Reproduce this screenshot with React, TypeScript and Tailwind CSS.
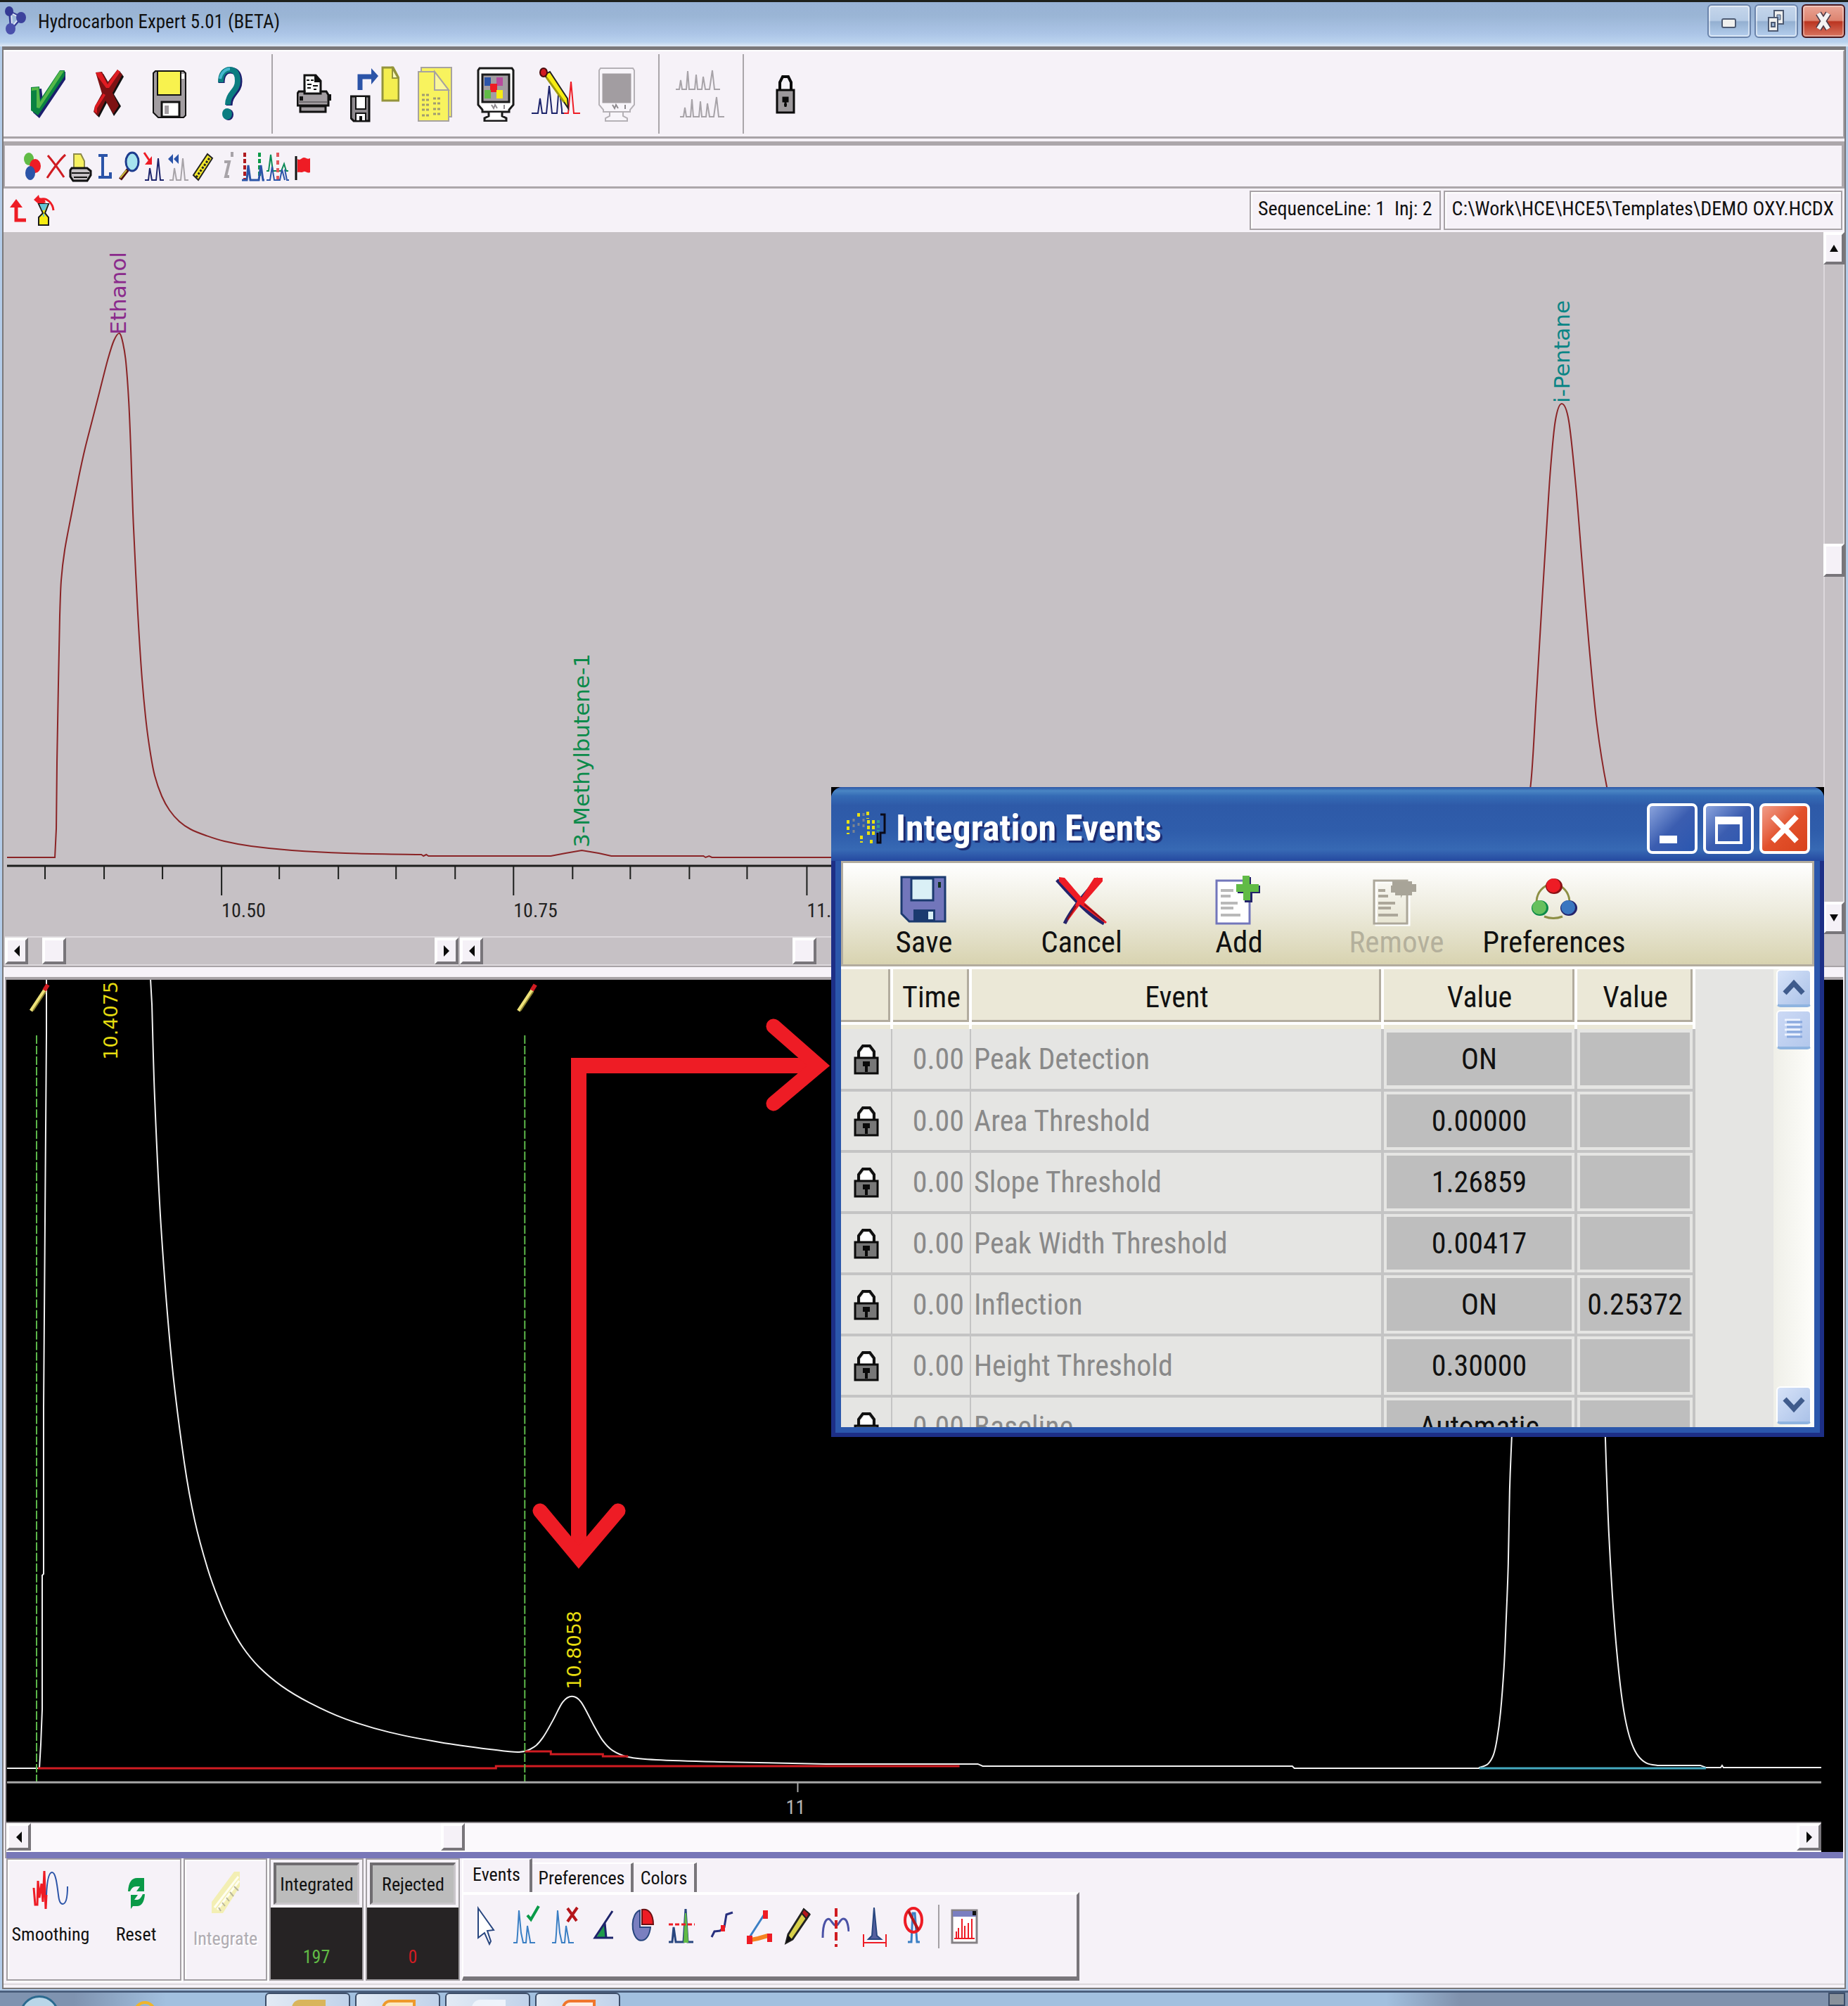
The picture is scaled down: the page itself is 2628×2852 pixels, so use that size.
import type { ReactNode } from "react";

const UI = "font-['Roboto_Condensed','Liberation_Sans',sans-serif]";

function Svg({ w, h, children, label }: { w: number; h: number; children: ReactNode; label?: string }) {
  return (
    <svg width={w} height={h} viewBox={`0 0 ${w} ${h}`} fill="none" aria-label={label} aria-hidden={label ? undefined : true} className="shrink-0">
      {children}
    </svg>
  );
}

/* ---------- main toolbar icons ---------- */

const CheckIcon = () => (
  <Svg w={50} h={70}>
    <path d="M3 28L15 27L17 44L44 3L49 3V14L12 69L3 61Z" fill="#1c1f6e" />
    <path d="M0 25L12 24L13 43L41 1L48 1V9L10 65L0 58Z" fill="#0a8241" />
    <path d="M1 26L11 25L13 46L41 2H47L12 55L8 54V29L1 30Z" fill="#55b848" />
  </Svg>
);
const CrossIcon = () => (
  <Svg w={44} h={70}>
    <path d="M6 8L14 6L22 20L37 2L43 10L29 35L39 52L29 66L19 47L8 68L3 63L14 36Z" fill="#111" />
    <path d="M3 4L12 3L20 18L34 0L41 7L27 33L36 51L28 63L17 44L6 66L0 60L2 52L12 34Z" fill="#7d1113" />
    <path d="M3 4L11 4L20 21L34 0L38 3L22 26L18 26L6 10Z" fill="#e01c22" />
    <path d="M1 60L2 52L14 34L17 36L5 55V62Z" fill="#e01c22" />
  </Svg>
);
const SaveIcon = () => (
  <Svg w={48} h={68}>
    <path d="M4 1H44L47 4V64L44 67H8L1 60V4Z" fill="#a29da1" stroke="#111" strokeWidth="2" />
    <rect x="8" y="2" width="32" height="34" fill="#f8f24e" />
    <path d="M7 2V35H40V2" stroke="#111" strokeWidth="2" />
    <rect x="41" y="5" width="4" height="7" fill="#fff" />
    <rect x="13" y="45" width="25" height="21" fill="#fff" stroke="#111" strokeWidth="3" />
    <rect x="17" y="50" width="6" height="12" fill="#a29da1" />
  </Svg>
);
const HelpIcon = () => (
  <Svg w={36} h={78}>
    <path d="M6 23C6 10 12 5 19 5C28 5 31 12 31 21C31 36 17 38 17 55" stroke="#1c1f6e" strokeWidth="9" />
    <path d="M5 22C5 9 11 4 18 4C26 4 29 11 29 20C29 35 15 37 15 54" stroke="#0b7d80" strokeWidth="8" />
    <path d="M4 17C6 8 12 3 18 3" stroke="#45b8cf" strokeWidth="4" />
    <ellipse cx="16" cy="68" rx="7" ry="8" fill="#1c1f6e" />
    <ellipse cx="14" cy="67" rx="7" ry="8" fill="#0b7d80" />
  </Svg>
);
const PrinterIcon = () => (
  <Svg w={50} h={58}>
    <path d="M11 26V2H27L34 10V26" fill="#fff" stroke="#111" strokeWidth="3" />
    <path d="M26 2V11H34" fill="#111" stroke="#111" strokeWidth="2" />
    <path d="M14 9H18M20 9H24M15 15H21M23 17H30M15 20H20M24 22H28" stroke="#111" strokeWidth="2" />
    <path d="M3 25H11V28H34V25H42L45 30V45H1V28Z" fill="#a29da1" stroke="#111" strokeWidth="3" />
    <rect x="4" y="32" width="5" height="6" fill="#111" />
    <rect x="44" y="29" width="5" height="9" fill="#111" />
    <path d="M5 46H41V54H5Z" fill="#a29da1" stroke="#111" strokeWidth="3" />
    <path d="M2 40H43" stroke="#6f6b6f" strokeWidth="2" />
  </Svg>
);
const ExportIcon = () => (
  <Svg w={70} h={80}>
    <path d="M14 34V15H31" stroke="#2b54a8" strokeWidth="7" />
    <path d="M30 3L40 14L30 26Z" fill="#2b54a8" />
    <path d="M46 2H61L69 17V49H46Z" fill="#f4ee50" stroke="#94943c" strokeWidth="3" />
    <path d="M60 3V17H68Z" fill="#fcfabd" stroke="#94943c" strokeWidth="2" />
    <path d="M1 43H27V78H5L1 74Z" fill="#8e8a8e" stroke="#111" strokeWidth="3" />
    <rect x="8" y="43" width="14" height="18" fill="#fff" stroke="#111" strokeWidth="2" />
    <rect x="8" y="67" width="14" height="11" fill="#fff" stroke="#111" strokeWidth="2" />
    <rect x="13" y="71" width="4" height="7" fill="#111" />
  </Svg>
);
const NotesIcon = () => (
  <Svg w={50} h={78}>
    <path d="M5 1H48V71H5Z" fill="#f8f35e" stroke="#a7a3a0" strokeWidth="2" />
    <path d="M1 7H24L44 33V77H1Z" fill="#f8f35e" stroke="#a7a3a0" strokeWidth="2" />
    <path d="M24 7V33H44Z" fill="#faf79a" stroke="#a7a3a0" strokeWidth="2" />
    <path d="M6 40H18M22 45H34M6 47H18M22 52H34M6 54H18M22 60H34M6 61H18M22 67H34M6 69H18" stroke="#a09c70" strokeWidth="3" strokeDasharray="4 2" />
  </Svg>
);
function MonitorIcon({ off }: { off?: boolean }) {
  const line = off ? "#b5b1b6" : "#1a1a1a";
  return (
    <Svg w={54} h={78}>
      <path d="M4 2H50L52 5V54L46 61V64H8V61L2 54V5Z" fill={off ? "#f8f5fa" : "#fff"} stroke={line} strokeWidth={off ? 2 : 3} />
      <rect x="8" y="11" width="38" height="39" fill="#a29da1" stroke={off ? "#a29da1" : line} strokeWidth="3" />
      {!off && (
        <>
          <rect x="11" y="15" width="9" height="12" fill="#2b54a8" />
          <rect x="28" y="15" width="9" height="12" fill="#b84b9e" />
          <rect x="19" y="24" width="10" height="12" fill="#ee1c25" />
          <rect x="11" y="33" width="9" height="12" fill="#61bb46" />
          <rect x="28" y="33" width="9" height="12" fill="#f7ec13" />
        </>
      )}
      <path d="M21 54L24 59L26 54L29 59M39 54V60" stroke="#8e8a8e" strokeWidth="2" />
      <path d="M17 65V70L11 73V77H42V73L36 70V65" fill={off ? "#f8f5fa" : "#fff"} stroke={line} strokeWidth={off ? 2 : 3} />
    </Svg>
  );
}
const EditPeaksIcon = () => (
  <Svg w={70} h={76}>
    <path d="M0 65H9L12 44L15 65H21L25 26L29 65H36L39 26L43 60V65H48" stroke="#1d246b" strokeWidth="2" />
    <path d="M46 65H52L56 20L60 65H69" stroke="#ee1c25" strokeWidth="2" />
    <path d="M18 10L44 46L52 58L51 44L26 6Z" fill="#f7ec13" stroke="#222" strokeWidth="2" />
    <path d="M21 14L46 49" stroke="#a09a10" strokeWidth="3" />
    <ellipse cx="17" cy="7" rx="5" ry="6" fill="#d01c22" stroke="#4b0c0d" strokeWidth="2" />
  </Svg>
);
const GhostPeaksIcon = () => (
  <Svg w={74} h={72}>
    <path d="M1 29H6L8 16L10 29H16L18 3L20 29H28L30 8L32 29H38L40 11L43 29H49L53 2L56 29H64" stroke="#a7a3a8" strokeWidth="2" />
    <path d="M7 68H12L14 55L16 68H22L24 43L26 68H34L36 46L38 68H44L46 49L49 68H55L59 40L62 68H70" stroke="#a7a3a8" strokeWidth="2" />
  </Svg>
);
const LockIcon = () => (
  <Svg w={28} h={58}>
    <path d="M6 24V12L10 4H18L22 12V24" stroke="#0a0a0a" strokeWidth="4" />
    <rect x="2" y="23" width="24" height="32" fill="#9c989b" stroke="#0a0a0a" strokeWidth="3" />
    <path d="M14 33V47M11 34H17V39H11ZM12 44H16" stroke="#0a0a0a" strokeWidth="3" />
  </Svg>
);

/* ---------- small toolbar icons, drawn in a 34 x 44 box ---------- */

const small: { name: string; art: ReactNode }[] = [
  {
    name: "Colours",
    art: (
      <>
        <ellipse cx="13" cy="11" rx="7" ry="9" fill="#61bb46" />
        <ellipse cx="22" cy="21" rx="8" ry="10" fill="#ee1c25" />
        <ellipse cx="15" cy="31" rx="7" ry="10" fill="#2b54a8" />
      </>
    ),
  },
  { name: "Delete", art: <path d="M5 6C12 14 22 28 28 37M30 5C22 12 12 26 4 38" stroke="#d01c22" strokeWidth="3" /> },
  {
    name: "Print",
    art: (
      <>
        <path d="M7 24V4H17L22 14V24" fill="#f7f160" stroke="#8e8a4a" strokeWidth="2" />
        <path d="M4 24H26L31 28V34L26 42H6L2 36V27Z" fill="#c6c1c5" stroke="#111" strokeWidth="3" />
        <path d="M4 31H29M7 37H26" stroke="#111" strokeWidth="2" />
      </>
    ),
  },
  { name: "Labels", art: <path d="M7 6H20M13 6V36M7 37H24V30" stroke="#2b54a8" strokeWidth="4" /> },
  {
    name: "Zoom",
    art: (
      <>
        <path d="M3 40L14 26" stroke="#4b0c0d" strokeWidth="5" />
        <path d="M3 38L12 27" stroke="#c9bd3d" strokeWidth="2" />
        <ellipse cx="20" cy="15" rx="9" ry="13" fill="#a7e4ee" stroke="#1d3c8e" strokeWidth="3" />
      </>
    ),
  },
  {
    name: "Jump to peak",
    art: (
      <>
        <path d="M2 2L10 14" stroke="#ee1c25" strokeWidth="3" />
        <path d="M13 7V19H3Z" fill="#ee1c25" />
        <path d="M3 41H8L10 24L13 41H19L22 10L25 41H30" stroke="#1d246b" strokeWidth="2" />
      </>
    ),
  },
  {
    name: "Previous peak",
    art: (
      <>
        <path d="M8 4V18L1 11ZM16 4V18L9 11Z" fill="#2b54a8" />
        <path d="M3 41H8L10 24L13 41H19L22 10L25 41H30" stroke="#a7a3a8" strokeWidth="2" />
      </>
    ),
  },
  {
    name: "Ruler",
    art: (
      <>
        <path d="M2 34L22 4L29 10L9 41Z" fill="#f4ea2a" stroke="#222" strokeWidth="2" />
        <path d="M6 37L26 8" stroke="#222" strokeWidth="3" strokeDasharray="3 2" />
      </>
    ),
  },
  { name: "Info", art: <path d="M20 3H22V8M11 15H18L13 36H18" stroke="#a7a3a8" strokeWidth="4" /> },
  {
    name: "Start markers",
    art: (
      <>
        <path d="M5 2V40" stroke="#b01b20" strokeWidth="4" strokeDasharray="6 3" />
        <path d="M26 2V36" stroke="#0a9a48" strokeWidth="4" strokeDasharray="6 3" />
        <path d="M1 41H8L10 20L13 41H25L28 20L31 41H33" stroke="#2b54a8" strokeWidth="3" />
      </>
    ),
  },
  {
    name: "Overlay",
    art: (
      <>
        <path d="M1 28H4L7 5L10 28H22L26 18L29 28H32" stroke="#0b8a56" strokeWidth="2" />
        <path d="M17 2V40" stroke="#e2575c" strokeWidth="4" strokeDasharray="6 5" />
        <path d="M1 41H6L9 22L12 41H20L23 26L27 41M27 26L30 41H33" stroke="#2b54a8" strokeWidth="2" />
      </>
    ),
  },
  {
    name: "Flag",
    art: (
      <>
        <path d="M8 7V41" stroke="#111" strokeWidth="3" />
        <path d="M10 11C14 14 16 9 19 9C22 9 24 12 28 10V30C24 32 21 28 19 29C15 31 13 29 10 30Z" fill="#ee1c25" />
      </>
    ),
  },
];

/* ---------- event tool icons, drawn in a 40 x 60 box ---------- */

const bluePeaks = "M2 54H7L8 42L10 8L13 40L16 54H20L22 30L26 52V54H33";
const tools: { name: string; art: ReactNode }[] = [
  {
    name: "Select",
    art: <path d="M7 5L29 36L20 37L25 52L23 56L16 40L7 47Z" fill="#fff" stroke="#28467f" strokeWidth="2" />,
  },
  {
    name: "Accept peak",
    art: (
      <>
        <path d={bluePeaks} stroke="#3a7fc4" strokeWidth="2" />
        <path d="M22 15L27 21L38 2" stroke="#0a9a48" strokeWidth="4" />
      </>
    ),
  },
  {
    name: "Reject peak",
    art: (
      <>
        <path d={bluePeaks} stroke="#3a7fc4" strokeWidth="2" />
        <path d="M24 5L37 23M38 4L24 24" stroke="#b5161b" strokeWidth="4" />
      </>
    ),
  },
  {
    name: "Slope",
    art: (
      <>
        <path d="M22 26L10 47H24Z" fill="#1f9a4a" />
        <path d="M33 9L8 47H34M22 26L24 47" stroke="#1d246b" strokeWidth="3" />
      </>
    ),
  },
  {
    name: "Area",
    art: (
      <>
        <path d="M17 8C4 12 3 42 15 50C26 54 31 42 32 32H17Z" fill="#7a7fc0" stroke="#28467f" strokeWidth="2" />
        <path d="M20 7C30 5 36 14 36 28H20Z" fill="#ee1c25" stroke="#6b1013" strokeWidth="2" />
      </>
    ),
  },
  {
    name: "Height limit",
    art: (
      <>
        <path d="M3 53H8L10 32L13 53H24L27 6L30 53H38" stroke="#28467f" strokeWidth="3" />
        <path d="M25 53L27 12L30 53Z" fill="#61bb46" stroke="#61bb46" strokeWidth="2" />
        <path d="M3 28H40" stroke="#ee1c25" strokeWidth="3" strokeDasharray="6 3" />
      </>
    ),
  },
  {
    name: "Inflection",
    art: (
      <>
        <path d="M9 46L13 38L21 37L27 32L30 14L39 11" stroke="#28307f" strokeWidth="3" />
        <rect x="22" y="29" width="6" height="9" fill="#ee1c25" />
      </>
    ),
  },
  {
    name: "Baseline points",
    art: (
      <>
        <path d="M8 46L30 12" stroke="#3a7fc4" strokeWidth="3" />
        <path d="M10 50L20 48L34 44" stroke="#f58220" strokeWidth="6" />
        <path d="M27 8H34V20H27ZM4 44H12V56H4ZM33 41H40V53H33Z" fill="#ee1c25" />
      </>
    ),
  },
  {
    name: "Draw",
    art: (
      <>
        <path d="M5 54L8 42L30 7L38 14L14 49Z" fill="#d8d04a" stroke="#222" strokeWidth="3" />
        <path d="M30 6L38 13L34 20L27 12Z" fill="#b5161b" stroke="#222" strokeWidth="2" />
        <path d="M5 54L8 43L13 49Z" fill="#111" />
      </>
    ),
  },
  {
    name: "Split",
    art: (
      <>
        <path d="M2 47C2 24 8 18 12 21C16 25 18 30 21 30C24 30 27 20 31 20C36 20 38 26 39 38" stroke="#4b52a6" strokeWidth="3" />
        <path d="M21 5V60" stroke="#d01c22" strokeWidth="4" strokeDasharray="12 5" />
      </>
    ),
  },
  {
    name: "Peak width",
    art: (
      <>
        <path d="M12 49L17 44L20 4L24 44L30 49Z" fill="#54609f" stroke="#28467f" strokeWidth="2" />
        <path d="M5 54H37M5 42V60M37 42V60" stroke="#ee1c25" strokeWidth="2" />
      </>
    ),
  },
  {
    name: "Ignore peak",
    art: (
      <>
        <path d="M13 53H18L20 12L23 12L26 53H30" stroke="#3a7fc4" strokeWidth="3" />
        <ellipse cx="21" cy="22" rx="12" ry="17" stroke="#ee1c25" strokeWidth="4" />
        <path d="M14 9L28 36" stroke="#b5161b" strokeWidth="4" />
      </>
    ),
  },
];

const ReportIcon = () => (
  <Svg w={40} h={60}>
    <rect x="2" y="8" width="35" height="46" fill="#fff" stroke="#858185" strokeWidth="3" />
    <rect x="3" y="9" width="33" height="8" fill="#7a7fc0" />
    <rect x="31" y="9" width="5" height="6" fill="#111" />
    <path d="M5 48H34M8 48V38M11 48V33M16 48V20M20 48V30M25 48V26M30 48V20" stroke="#ee1c25" strokeWidth="2" />
  </Svg>
);

/* ---------- classic scroll bar parts ---------- */

const raised = "bg-[#f5f1f7] border-t-4 border-l-4 border-t-white border-l-white border-r-4 border-b-4 border-r-[#78757a] border-b-[#78757a]";

function Arrow({ dir }: { dir: "left" | "right" | "up" | "down" }) {
  if (dir === "left" || dir === "right")
    return <Svg w={8} h={16}><path d={dir === "left" ? "M8 0V16L0 8Z" : "M0 0V16L8 8Z"} fill="#0a0a0a" /></Svg>;
  return <Svg w={12} h={10}><path d={dir === "up" ? "M6 0L12 10H0Z" : "M0 0H12L6 10Z"} fill="#0a0a0a" /></Svg>;
}

function ScrollButton({ dir, className }: { dir: "left" | "right" | "up" | "down"; className: string }) {
  return (
    <button type="button" aria-label={`Scroll ${dir}`} className={`flex shrink-0 items-center justify-center ${raised} ${className}`}>
      <Arrow dir={dir} />
    </button>
  );
}

/* Smooth path through a list of points (Catmull-Rom converted to cubic curves). */
function smooth(p: number[][], start = "M") {
  let d = `${start}${p[0][0]} ${p[0][1]}`;
  for (let i = 0; i < p.length - 1; i++) {
    const a = p[i - 1] ?? p[i];
    const b = p[i];
    const c = p[i + 1];
    const e = p[i + 2] ?? c;
    d += `C${b[0] + (c[0] - a[0]) / 6} ${b[1] + (c[1] - a[1]) / 6} ${c[0] - (e[0] - b[0]) / 6} ${c[1] - (e[1] - b[1]) / 6} ${c[0]} ${c[1]}`;
  }
  return d;
}

/* ---------- upper chromatogram ---------- */

const TOP = { x: 5, y: 330, w: 2587, h: 1001 };
const topCurve =
  "M10 1219H78L80 1178L81 1083L83 971L85 874" +
  smooth([[85, 874], [87, 825], [92, 782], [102, 729], [112, 678], [121, 637], [131, 598], [142, 555], [153, 512], [162, 484], [170, 474], [175, 489], [179, 515], [183, 570], [186, 640], [189, 730], [193, 816], [197, 891], [202, 966], [208, 1029], [214, 1072], [220, 1103], [230, 1132], [241, 1152], [255, 1168], [271, 1179], [293, 1188], [319, 1196], [357, 1203], [415, 1209], [491, 1213], [599, 1215]], "L") +
  "L602 1217L606 1215L609 1217H783L804 1213L827 1209L851 1213L869 1217H1000L1003 1219L1008 1217L1012 1219H2100" +
  smooth([[2100, 1219], [2140, 1200], [2165, 1160], [2176, 1115], [2184, 990], [2191, 873], [2198, 760], [2204, 668], [2211, 598], [2220, 574], [2230, 598], [2240, 690], [2249, 800], [2259, 919], [2270, 1030], [2284, 1118], [2300, 1180], [2330, 1219]], "L") +
  "H2580";
const minorTicks = [64, 148, 231, 397, 481, 563, 647, 814, 896, 980, 1062];
const majorTicks = [
  { x: 315, text: "10.50" },
  { x: 730, text: "10.75" },
  { x: 1147, text: "11.00" },
];
const topLabels = [
  { x: 168, y: 476, text: "Ethanol", color: "text-[#8a2a8c]" },
  { x: 827, y: 1205, text: "3-Methylbutene-1", color: "text-[#0b8a4a]" },
  { x: 2220, y: 573, text: "i-Pentane", color: "text-[#0b8585]" },
];

function UpperChart() {
  const { x, y, w, h } = TOP;
  return (
    <div className="relative h-[1001px] overflow-hidden">
      <svg viewBox={`${x} ${y} ${w} ${h}`} preserveAspectRatio="none" className="absolute inset-0 size-full" fill="none" aria-label="Named peaks chromatogram">
        <path d={topCurve} stroke="#8a2426" strokeWidth="2" />
        <path d="M10 1231H2592" stroke="#1c1e1c" strokeWidth="3" />
        <path d={minorTicks.map((t) => `M${t} 1231V1250`).join("") + majorTicks.map((t) => `M${t.x} 1231V1273`).join("")} stroke="#1c1e1c" strokeWidth="2" />
      </svg>
      {topLabels.map((l) => (
        <span
          key={l.text}
          className={`absolute -translate-x-1/2 rotate-180 [writing-mode:vertical-rl] font-['DejaVu_Sans',sans-serif] text-[31px] leading-[32px] ${l.color}`}
          style={{ left: `${((l.x - x) / w) * 100}%`, bottom: `${((y + h - l.y) / h) * 100}%` }}
        >
          {l.text}
        </span>
      ))}
      {majorTicks.map((t) => (
        <span key={t.text} className="absolute bottom-[18px] text-[28px] leading-[36px] text-[#222]" style={{ left: `${((t.x - x) / w) * 100}%` }}>
          {t.text}
        </span>
      ))}
    </div>
  );
}

/* ---------- lower chromatogram ---------- */

const LOW = { x: 9, y: 1394, w: 2580, h: 1196 };
const lowCurve =
  "M10 2514H56L58 2480L60 2430V2240L62 2238V2000L66 1470V1394M214 1394L216 1430" +
  smooth([[216, 1430], [220, 1564], [229, 1746], [244, 1935], [262, 2080], [277, 2163], [295, 2230], [311, 2275], [326, 2309], [345, 2342], [368, 2370], [400, 2397], [440, 2421], [491, 2444], [554, 2463], [625, 2477], [696, 2487], [738, 2491], [759, 2484], [772, 2470], [786, 2446], [800, 2420], [813, 2412], [826, 2420], [844, 2453], [857, 2475], [871, 2489], [893, 2498], [933, 2502], [1024, 2505], [1174, 2508]], "L") +
  "H1390L1397 2511H1837L1840 2514H2103" +
  smooth([[2103, 2513], [2115, 2508], [2123, 2495], [2128, 2473], [2133, 2435], [2138, 2370], [2141, 2304], [2144, 2224], [2146, 2120], [2149, 2043], [2160, 1800]], "L") +
  smooth([[2275, 1800], [2282, 2043], [2284, 2103], [2287, 2180], [2292, 2268], [2298, 2345], [2305, 2410], [2312, 2452], [2320, 2480], [2329, 2497], [2341, 2507], [2356, 2510]]) +
  "H2417L2425 2513H2446L2448 2510L2450 2513H2589";
const lowLabels = [
  { x: 158, y: 1508, text: "10.4075" },
  { x: 817, y: 2402, text: "10.8058" },
];

function LowerChart() {
  const { x, y, w, h } = LOW;
  return (
    <div className="relative min-h-[1190px] flex-1 overflow-hidden">
      <svg viewBox={`${x} ${y} ${w} ${h}`} preserveAspectRatio="none" className="absolute inset-0 size-full" fill="none" aria-label="Integrated chromatogram">
        <path d={lowCurve} stroke="#f2f2f2" strokeWidth="2" />
        <path d="M54 2514H705V2511H1364M746 2490H783V2494H857V2497H893" stroke="#d01c22" strokeWidth="3" />
        <path d="M2103 2514H2425" stroke="#45a9c0" strokeWidth="3" />
        <path d="M52 1473V2533M746 1473V2533" stroke="#5db84a" strokeWidth="2" strokeDasharray="12 3" />
        <path d="M10 2534H2589" stroke="#a8a8a8" strokeWidth="3" />
        <path d="M1134 2535V2548" stroke="#a8a8a8" strokeWidth="2" />
        {[42, 735].map((px) => (
          <g key={px}>
            <path d={`M${px + 2} 1438L${px + 22} 1408`} stroke="#eee27a" strokeWidth="5" />
            <path d={`M${px + 5} 1438L${px + 23} 1411`} stroke="#8d8430" strokeWidth="2" />
            <path d={`M${px + 21} 1409L${px + 26} 1401`} stroke="#d01c22" strokeWidth="6" />
          </g>
        ))}
      </svg>
      {lowLabels.map((l) => (
        <span
          key={l.text}
          className="absolute -translate-x-1/2 rotate-180 [writing-mode:vertical-rl] font-['DejaVu_Sans',sans-serif] text-[27px] leading-[28px] text-[#e6dc10]"
          style={{ left: `${((l.x - x) / w) * 100}%`, bottom: `${((y + h - l.y) / h) * 100}%` }}
        >
          {l.text}
        </span>
      ))}
      <span className="absolute bottom-1 -translate-x-1/2 text-[28px] leading-8 text-[#b4b4b4]" style={{ left: `${((1131 - x) / w) * 100}%` }}>
        11
      </span>
      <svg viewBox="755 1440 435 800" width="435" height="800" className="absolute left-[746px] top-[46px]" fill="none" aria-hidden>
        <path d="M1162 1516H823V2210" stroke="#ee1c25" strokeWidth="22" />
        <path d="M1100 1460L1164 1516L1100 1570M768 2149L823 2215L879 2149" stroke="#ee1c25" strokeWidth="21" strokeLinecap="round" />
      </svg>
    </div>
  );
}

/* ---------- Integration Events window ---------- */

const rows = [
  ["Peak Detection", "ON", ""],
  ["Area Threshold", "0.00000", ""],
  ["Slope Threshold", "1.26859", ""],
  ["Peak Width Threshold", "0.00417", ""],
  ["Inflection", "ON", "0.25372"],
  ["Height Threshold", "0.30000", ""],
  ["Baseline", "Automatic", ""],
];

const dialogTools: { name: string; disabled?: boolean; art: ReactNode }[] = [
  {
    name: "Save",
    art: (
      <>
        <path d="M6 4H68V67H17L6 56Z" fill="#7276bb" stroke="#1b3a6f" strokeWidth="3" />
        <rect x="20" y="6" width="31" height="31" fill="#daf0f6" stroke="#1b3a6f" strokeWidth="3" />
        <rect x="58" y="11" width="4" height="8" fill="#12331f" />
        <rect x="23" y="50" width="31" height="17" fill="#1b3a6f" />
        <rect x="44" y="53" width="7" height="11" fill="#daf0f6" />
      </>
    ),
  },
  {
    name: "Cancel",
    art: (
      <>
        <path d="M3 8C14 20 46 58 70 70M62 6C46 24 26 46 14 70" stroke="#24246b" strokeWidth="5" />
        <path d="M6 4L14 5L38 33L56 5L68 5L68 10L42 40L74 68L72 70L36 43L17 68L32 38L6 10Z" fill="#ee1c25" />
        <path d="M42 43L70 66M30 45L18 64" stroke="#8a1216" strokeWidth="2" />
      </>
    ),
  },
  {
    name: "Add",
    art: (
      <>
        <rect x="6" y="9" width="47" height="61" fill="#fff" stroke="#7276bb" strokeWidth="3" />
        <path d="M12 23H30M12 31H26M12 41H36M12 48H30M12 58H40" stroke="#b9b9b9" strokeWidth="4" />
        <path d="M45 4H55V16H68V27H57V40H46V27H36V16H45Z" fill="#24246b" />
        <path d="M43 2H53V14H66V25H54V37H44V25H34V14H43Z" fill="#61bb46" />
      </>
    ),
  },
  {
    name: "Remove",
    disabled: true,
    art: (
      <>
        <rect x="9" y="11" width="47" height="61" stroke="#fff" strokeWidth="3" />
        <rect x="6" y="9" width="47" height="61" stroke="#aca79a" strokeWidth="3" />
        <path d="M12 23H22M12 31H26M12 41H36M12 48H30M12 58H40" stroke="#aca79a" strokeWidth="4" />
        <path d="M32 10H60V14H66V25H60V30H46L44 34V30H36V26H30V16H32Z" fill="#a8a498" />
      </>
    ),
  },
  {
    name: "Preferences",
    art: (
      <>
        <path d="M27 16C17 22 13 30 13 40M46 16C56 22 60 30 60 40M24 60C32 63 42 63 50 60" stroke="#8d8f45" strokeWidth="3" />
        <ellipse cx="38" cy="17" rx="12" ry="11" fill="#8a1216" />
        <ellipse cx="37" cy="16" rx="10" ry="10" fill="#ee1c25" />
        <ellipse cx="18" cy="48" rx="12" ry="11" fill="#0a8a48" />
        <ellipse cx="17" cy="47" rx="10" ry="10" fill="#66c05e" />
        <ellipse cx="59" cy="48" rx="12" ry="11" fill="#24246b" />
        <ellipse cx="58" cy="47" rx="10" ry="10" fill="#3a76c0" />
      </>
    ),
  },
];

const RowLock = () => (
  <Svg w={36} h={46} label="Locked">
    <path d="M7 20V12L13 4H23L29 12V20" stroke="#111" strokeWidth="4" />
    <path d="M10 20V13L15 7H21L26 13V20" fill="#fff" />
    <rect x="2" y="21" width="32" height="22" fill="#777" stroke="#0a0a0a" strokeWidth="3" />
    <path d="M13 26H23V33H20V41H16V33H13Z" fill="#0a0a0a" />
  </Svg>
);

function Th({ children, label }: { children?: ReactNode; label?: string }) {
  return (
    <th aria-label={label} className="h-[85px] border-r-4 border-white bg-[#ebe8d7] p-0 align-top font-normal">
      <div className="flex h-[75px] items-center justify-center border-b-[3px] border-r-[3px] border-[#b2ac9e] pl-1 pt-2 shadow-[0_4px_0_#fff]">{children}</div>
    </th>
  );
}

function DialogScroll({ dir }: { dir: "up" | "down" }) {
  return (
    <button type="button" aria-label={`Scroll ${dir}`} className="mx-1 flex h-[54px] shrink-0 items-center justify-center rounded-md border-2 border-b-4 border-white border-b-[#8fb4e0] bg-gradient-to-br from-[#d6e2f8] to-[#abc2e8]">
      <Svg w={32} h={24}>
        <path d={dir === "up" ? "M3 20L16 6L29 20" : "M3 4L16 18L29 4"} stroke="#3f5b8c" strokeWidth="7" />
      </Svg>
    </button>
  );
}

function IntegrationEvents() {
  const caption = "flex h-[72px] w-[72px] items-center justify-center rounded-lg border-4 border-white";
  return (
    <section aria-label="Integration Events" className="absolute right-[34px] top-[1119px] h-[924px] w-[1412px] bg-black">
      <div className="flex h-full flex-col rounded-t-2xl border-x-[6px] border-b-[6px] border-[#1d2f86] bg-[#2b57ab] px-2 pb-2">
        <header className="-mx-[14px] flex h-[105px] shrink-0 items-center rounded-t-2xl bg-[linear-gradient(#2b55a5_0%,#4a86c4_5%,#356bb5_12%,#2e5aa8_25%,#2f5dab_60%,#3769b4_85%,#2549a0_100%)] px-5 pt-3">
          <Svg w={60} h={52}>
            <path d="M50 6H56V32H50V46H46V32" stroke="#0a0a18" strokeWidth="3" />
            <path d="M4 14V34M19 4V12M32 2V12" stroke="#e8e014" strokeWidth="4" strokeDasharray="5 4" />
            <path d="M12 12V34M19 18V26M26 4V28" stroke="#7d8590" strokeWidth="3" strokeDasharray="4 4" />
            <path d="M33 14V36M40 14V36M23 36V46M37 42V50" stroke="#e8e014" strokeWidth="4" strokeDasharray="5 3" />
            <path d="M47 14V30" stroke="#2f9a94" strokeWidth="4" strokeDasharray="4 3" />
          </Svg>
          <h2 className="ml-3 flex-1 text-[52px] font-bold leading-[60px] text-white [text-shadow:3px_3px_1px_#1c2a70]">Integration Events</h2>
          <div className="flex gap-2">
            <button type="button" aria-label="Minimize" className={`${caption} bg-gradient-to-br from-[#8ba3dc] via-[#3b5db0] to-[#2a57b0]`}>
              <Svg w={60} h={60}><rect x="12" y="40" width="25" height="11" fill="#fff" /></Svg>
            </button>
            <button type="button" aria-label="Maximize" className={`${caption} bg-gradient-to-br from-[#8ba3dc] via-[#3b5db0] to-[#2a57b0]`}>
              <Svg w={60} h={60}><path d="M13 16H48V50H13Z" stroke="#fff" strokeWidth="4" /><rect x="11" y="13" width="39" height="11" fill="#fff" /></Svg>
            </button>
            <button type="button" aria-label="Close" className={`${caption} bg-gradient-to-br from-[#ef9c88] via-[#e2502a] to-[#d8421c]`}>
              <Svg w={60} h={60}><path d="M13 13L47 48M47 13L13 48" stroke="#fff" strokeWidth="8" /></Svg>
            </button>
          </div>
        </header>
        <div className="flex h-[150px] shrink-0 border-[3px] border-[#b2ac9e] bg-gradient-to-b from-white via-[#eceadb] to-[#d8d3b0] pl-[3px] text-[43px] leading-[44px]">
          {dialogTools.map((t) => (
            <button key={t.name} type="button" disabled={t.disabled} className={`flex w-[224px] flex-col items-center pt-4 ${t.disabled ? "text-[#b4b09c]" : "text-[#111]"}`}>
              <Svg w={76} h={74}>{t.art}</Svg>
              <span>{t.name}</span>
            </button>
          ))}
        </div>
        <div className="flex min-h-0 flex-1 border-t-4 border-white bg-[#e5e5e3]">
          <div className="flex-1 overflow-hidden">
            <table className="w-[1213px] table-fixed border-collapse text-[42px] leading-[48px] text-[#111]">
              <colgroup>
                <col className="w-[72px]" />
                <col className="w-[112px]" />
                <col className="w-[586px]" />
                <col className="w-[275px]" />
                <col className="w-[168px]" />
              </colgroup>
              <thead>
                <tr>
                  <Th label="Locked" />
                  <Th>Time</Th>
                  <Th>Event</Th>
                  <Th>Value</Th>
                  <Th>Value</Th>
                </tr>
              </thead>
              <tbody>
                {rows.map(([event, value, extra]) => (
                  <tr key={event} className="h-[87px] border-b-4 border-[#c4c4c4]">
                    <td className="border-r-2 border-[#c4c4c4] p-0"><div className="flex justify-center"><RowLock /></div></td>
                    <td className="border-r-2 border-[#c4c4c4] p-0 pr-2 text-right text-[#898989]">0.00</td>
                    <td className="border-r-4 border-[#c4c4c4] p-0 pl-1 text-[#898989]">{event}</td>
                    <td className="border-r-4 border-[#c4c4c4] p-1"><div className="flex h-[75px] items-center justify-center bg-[#bebebe]">{value}</div></td>
                    <td className="border-r-4 border-[#c4c4c4] p-1"><div className="flex h-[75px] items-center justify-center bg-[#bebebe]">{extra}</div></td>
                  </tr>
                ))}
              </tbody>
            </table>
          </div>
          <div className="flex w-[58px] shrink-0 flex-col gap-1 bg-gradient-to-r from-[#efefe8] to-[#fefefb] pb-1">
            <DialogScroll dir="up" />
            <div className="mx-1 flex h-[56px] items-center justify-center rounded-md border-2 border-b-4 border-white border-b-[#8fb4e0] bg-gradient-to-br from-[#ccd9f5] to-[#b3c8ec]">
              <Svg w={26} h={30}>
                <path d="M0 2H22M0 9H22M0 16H22M0 23H22" stroke="#eef4ff" strokeWidth="3" />
                <path d="M3 5H25M3 12H25M3 19H25M3 26H25" stroke="#88a8de" strokeWidth="3" />
              </Svg>
            </div>
            <div className="flex-1" />
            <DialogScroll dir="down" />
          </div>
        </div>
      </div>
    </section>
  );
}

/* ---------- bottom control strip ---------- */

const group = "flex border-2 border-[#a39fa3] shadow-[inset_2px_2px_0_#fff,2px_2px_0_#fff]";

function Counter({ name, value, color }: { name: string; value: number; color: string }) {
  return (
    <div className="flex w-[134px] flex-col border-2 border-[#a39fa3]">
      <div className="bg-[#f6f2f8] p-1">
        <button type="button" className="h-[60px] w-full border-4 border-b-[3px] border-r-[3px] border-[#6f6c70] border-b-[#c9c5ca] border-r-[#c9c5ca] bg-[#bcbcbc]">
          {name}
        </button>
      </div>
      <output aria-label={name} className={`flex flex-1 items-end justify-center bg-[#262324] pb-3 leading-10 ${color}`}>
        {value}
      </output>
    </div>
  );
}

function BottomStrip() {
  return (
    <footer className="flex h-[178px] gap-[3px] bg-[#f6f2f8] pb-1 pl-1 text-[26px] leading-8">
      <div className={`${group} w-[249px]`}>
        <button type="button" className="flex w-[126px] flex-col items-center pr-1 pt-3.5">
          <Svg w={52} h={60}>
            <path d="M2 26L4 50L7 50L8 16L10 40L13 20L15 46L17 2L19 56L20 36" stroke="#ee1c25" strokeWidth="3" />
            <path d="M20 36C21 14 24 4 28 4C33 4 35 20 37 36C38 46 40 49 43 49C48 49 50 40 50 24" stroke="#2b54a8" strokeWidth="2" />
          </Svg>
          <span className="mt-4">Smoothing</span>
        </button>
        <button type="button" className="flex flex-1 flex-col items-center pr-1.5 pt-3.5">
          <Svg w={30} h={60}>
            <path d="M3 31C4 18 8 12 16 12H26V31H15L20 24H15C10 24 8 27 6 31Z" fill="#0a9a48" />
            <path d="M27 35C26 47 22 52 16 52H10L7 56V36H17L12 43H16C20 43 22 39 24 35Z" fill="#0a9a48" />
          </Svg>
          <span className="mt-4">Reset</span>
        </button>
      </div>
      <div className={`${group} w-[119px]`}>
        <button type="button" disabled className="flex flex-1 flex-col items-center pt-4 text-[#b0acb2]">
          <Svg w={44} h={60}>
            <path d="M2 44L34 1H42V22L18 60H2Z" fill="#f3efb4" />
            <path d="M6 52L40 8M10 55L41 14" stroke="#fffef0" strokeWidth="3" />
            <path d="M12 52L15 57M17 45L21 50M23 38L27 43M28 30L33 36M34 22L40 28" stroke="#b9b69a" strokeWidth="2" />
          </Svg>
          <span className="mt-5 [text-shadow:2px_2px_0_#fff]">Integrate</span>
        </button>
      </div>
      <Counter name="Integrated" value={197} color="text-[#61bb46]" />
      <Counter name="Rejected" value={0} color="text-[#d01c22]" />
      <div className="flex w-[878px] flex-col">
        <div role="tablist" className="flex items-end">
          <button type="button" role="tab" aria-selected className="h-12 w-[100px] border-l-2 border-t-2 border-r-4 border-white border-r-[#78757a] pb-1">Events</button>
          <button type="button" role="tab" aria-selected={false} className="h-[42px] w-[144px] border-r-4 border-t-2 border-white border-r-[#78757a]">Preferences</button>
          <button type="button" role="tab" aria-selected={false} className="h-[42px] w-[90px] border-r-4 border-t-2 border-white border-r-[#78757a]">Colors</button>
        </div>
        <div className="flex flex-1 border-b-[6px] border-l-2 border-r-4 border-t-4 border-white border-b-[#78757a] border-r-[#78757a] pl-3.5 pt-3.5">
          <div className="flex gap-[15px]">
            {tools.map((t) => (
              <button key={t.name} type="button" aria-label={t.name} className="h-[60px]">
                <Svg w={40} h={60}>{t.art}</Svg>
              </button>
            ))}
          </div>
          <div className="mx-4 h-[62px] w-0.5 bg-[#a39fa3]" />
          <button type="button" aria-label="Report" className="h-[60px]"><ReportIcon /></button>
        </div>
      </div>
    </footer>
  );
}

/* ---------- page ---------- */

function ToolButton({ name, children, disabled }: { name: string; children: ReactNode; disabled?: boolean }) {
  return (
    <button type="button" aria-label={name} disabled={disabled} className="flex w-[86px] items-center justify-center">
      {children}
    </button>
  );
}
const Rule = () => <div className="mx-4 w-0.5 self-stretch bg-[#aaa6aa]" />;

export default function App() {
  const winButton = "flex h-12 w-[62px] items-center justify-center rounded-md border-2 border-[#6b84ab] bg-[linear-gradient(#c5d6eb_0%,#b6cbe5_48%,#93afd0_52%,#b5cfee_100%)] shadow-[inset_0_0_0_2px_rgba(255,255,255,0.5)]";
  return (
    <div className={`relative flex min-h-screen flex-col overflow-hidden bg-[#b3cce9] text-[#111] ${UI}`}>
      <header className="flex h-[66px] shrink-0 items-start border-t-[3px] border-[#1d201c] bg-[linear-gradient(#98b2d6_0%,#9ab5d5_30%,#abc4e6_70%,#b9d2ee_90%,#dfe9f4_100%)] pl-1.5 pr-1">
        <div className="mt-1"><Svg w={34} h={44}>
          <path d="M8 10L24 18L10 34Z" stroke="#343a94" strokeWidth="4" />
          <path d="M10 12L22 18L11 31Z" stroke="#dce6f4" strokeWidth="2" />
          <ellipse cx="7" cy="9" rx="6" ry="7" fill="#343a94" /><ellipse cx="24" cy="18" rx="7" ry="8" fill="#3c429c" /><ellipse cx="9" cy="34" rx="7" ry="8" fill="#4a50ac" />
        </Svg></div>
        <h1 className="ml-3.5 mt-2.5 flex-1 text-[27px] leading-9">Hydrocarbon Expert 5.01 (BETA)</h1>
        <div className="mt-[3px] flex gap-[5px]">
          <button type="button" aria-label="Minimize" className={winButton}>
            <Svg w={24} h={24}><rect x="2" y="9" width="19" height="12" rx="2" fill="#f0f0ee" stroke="#4d5a72" strokeWidth="2" /></Svg>
          </button>
          <button type="button" aria-label="Restore" className={winButton}>
            <Svg w={26} h={34}>
              <path d="M10 2H23V21H10Z" fill="#f0f0ee" stroke="#4d5a72" strokeWidth="2" /><path d="M14 8H19V15H14Z" fill="#9cb5d4" stroke="#4d5a72" />
              <path d="M2 12H15V31H2Z" fill="#f0f0ee" stroke="#4d5a72" strokeWidth="2" /><path d="M6 19H11V25H6Z" fill="#9cb5d4" stroke="#4d5a72" strokeWidth="2" />
            </Svg>
          </button>
          <button type="button" aria-label="Close" className="flex h-12 w-[62px] items-center justify-center rounded-md border-2 border-[#4b1a20] bg-[linear-gradient(#eaa595_0%,#dd8470_48%,#ba3420_52%,#d97560_100%)] shadow-[inset_0_0_0_2px_rgba(255,255,255,0.35)]">
            <Svg w={24} h={28}><path d="M5 3L19 25M19 3L5 25" stroke="#4d3b48" strokeWidth="9" /><path d="M5 3L19 25M19 3L5 25" stroke="#f4f2f2" strokeWidth="6" /></Svg>
          </button>
        </div>
      </header>

      <main className="ml-[3px] mr-[3px] flex flex-1 flex-col border-x-2 border-b-2 border-t-[5px] border-[#7a787a] bg-[#f6f2f8]">
        <div role="toolbar" aria-label="Main" className="flex h-[126px] shrink-0 items-stretch border-b-[3px] border-r-2 border-t-2 border-[#a8a3a7] border-t-white pb-1 pl-[21px] pt-1">
          <ToolButton name="Accept"><CheckIcon /></ToolButton>
          <ToolButton name="Cancel"><CrossIcon /></ToolButton>
          <ToolButton name="Save"><SaveIcon /></ToolButton>
          <ToolButton name="Help"><HelpIcon /></ToolButton>
          <Rule />
          <ToolButton name="Print"><PrinterIcon /></ToolButton>
          <ToolButton name="Export"><ExportIcon /></ToolButton>
          <ToolButton name="Notes"><NotesIcon /></ToolButton>
          <ToolButton name="Display"><MonitorIcon /></ToolButton>
          <ToolButton name="Edit peaks"><EditPeaksIcon /></ToolButton>
          <ToolButton name="Display off" disabled><MonitorIcon off /></ToolButton>
          <Rule />
          <ToolButton name="Compare" disabled><GhostPeaksIcon /></ToolButton>
          <Rule />
          <ToolButton name="Lock"><LockIcon /></ToolButton>
        </div>
        <div role="toolbar" aria-label="Chart" className="mt-1 flex h-[67px] shrink-0 items-center border-b-[3px] border-l-2 border-r-4 border-t-[6px] border-[#aca7ab] pl-[21px] pt-0.5">
          {small.map((s) => (
            <button key={s.name} type="button" aria-label={s.name} className="w-[35px]">
              <Svg w={34} h={44}>{s.art}</Svg>
            </button>
          ))}
        </div>
        <div className="flex h-[62px] shrink-0 items-center pl-1 pr-[3px]">
          <button type="button" aria-label="Undo" className="w-9">
            <Svg w={34} h={44}><path d="M14 12V36H28" stroke="#ee1c25" strokeWidth="5" /><path d="M14 6L23 18H5Z" fill="#ee1c25" /></Svg>
          </button>
          <button type="button" aria-label="Revert" className="w-9">
            <Svg w={34} h={48}>
              <path d="M14 8C22 6 30 14 31 24" stroke="#ee1c25" strokeWidth="3" />
              <path d="M10 2L3 9L11 16L20 13L18 8L11 6Z" fill="#ee1c25" />
              <path d="M10 15H24L19 28L24 34V45H10V34L16 28Z" fill="#f7ec13" stroke="#1a1a1a" strokeWidth="2" />
              <path d="M11 15H23L19 24H15ZM16 29H18V33H16Z" fill="#63c6d8" />
            </Svg>
          </button>
          <div className="flex-1" />
          <div className="flex h-14 gap-1 text-[28px] leading-9">
            <div className="whitespace-pre border-2 border-[#a8a3a7] px-2.5 pt-1.5 shadow-[inset_2px_2px_0_#fff]">SequenceLine: 1  Inj: 2</div>
            <div className="border-2 border-[#a8a3a7] px-2.5 pt-1.5 shadow-[inset_2px_2px_0_#fff]">C:\Work\HCE\HCE5\Templates\DEMO OXY.HCDX</div>
          </div>
        </div>

        <div className="flex shrink-0 border-b-2 border-[#a8a3a7] bg-[#c6c1c5]">
          <div className="min-w-0 flex-1">
            <UpperChart />
            <div className="flex h-[42px] items-stretch pl-0.5">
              <div className="flex w-[645px] border-y-2 border-[#dcd8dc]">
                <ScrollButton dir="left" className="w-[33px]" />
                <div className="w-5" />
                <div className={`w-[34px] ${raised}`} />
                <div className="flex-1" />
                <ScrollButton dir="right" className="w-[34px]" />
              </div>
              <div className="ml-0.5 flex flex-1 border-y-2 border-[#dcd8dc]">
                <ScrollButton dir="left" className="w-[33px]" />
                <div className="w-[440px]" />
                <div className={`w-[34px] ${raised}`} />
                <div className="flex-1" />
                <ScrollButton dir="right" className="w-[33px]" />
              </div>
            </div>
          </div>
          <div className="mb-[45px] flex w-[30px] flex-col border-x-2 border-[#dcd8dc]">
            <ScrollButton dir="up" className="-mx-0.5 h-[46px]" />
            <div className="h-[397px]" />
            <div className={`-mx-0.5 h-[47px] ${raised}`} />
            <div className="flex-1" />
            <ScrollButton dir="down" className="-mx-0.5 h-[46px]" />
          </div>
        </div>

        <div className="ml-[2px] mr-[2px] mt-3.5 flex flex-1 flex-col border-l-2 border-t-4 border-[#a8a3a7] bg-black">
          <div className="mr-[31px] flex flex-1 flex-col">
            <LowerChart />
            <div className="flex h-[43px] border-y-2 border-b-white border-t-[#858185] bg-[#fbf9fc]">
              <ScrollButton dir="left" className="w-[35px]" />
              <div className="w-[583px]" />
              <div className={`w-[34px] ${raised}`} />
              <div className="flex-1" />
              <ScrollButton dir="right" className="w-[35px]" />
            </div>
          </div>
          <div className="h-[9px] bg-[#7878b8]" />
        </div>
        <BottomStrip />
        <div className="h-1.5 border-t-2 border-[#dcd8dc]" />
      </main>

      <nav aria-label="Taskbar" className="mt-0.5 flex h-[22px] shrink-0 gap-[7px] overflow-hidden border-t-[3px] border-[#4b5f7d] bg-[linear-gradient(90deg,#7f93b0_0%,#7f93b0_4%,#a2c0df_9%,#a2c0df_75%,#8092ad_79%,#8092ad_100%)] pr-1">
        <div className="flex w-[370px] shrink-0 gap-[106px] pl-7 pt-1">
          <div className="h-14 w-14 rounded-full border-[3px] border-[#2b6a8f] bg-[#b9d6e8]" />
          <div className="mt-2 h-8 w-8 rounded-full border-4 border-[#efb52c]" />
        </div>
        {["bg-[#d9b55c]", "bg-[#fbe9c4] border-4 border-[#ee9a2c]", "bg-[#eef3fb]", "bg-[#fdeee6] border-4 border-[#f0762c]"].map((c, i) => (
          <div key={i} className="h-10 w-[121px] shrink-0 rounded-t-md border-2 border-[#3c4d68] bg-gradient-to-r from-[#e3ebf5] to-[#c0d2ea] pl-9 pt-2">
            <div className={`h-6 w-12 rounded-tl-xl ${c}`} />
          </div>
        ))}
        <div className="flex-1" />
        <div className="w-6 border-2 border-[#3c4d68] bg-[#8a929c]" />
      </nav>

      <IntegrationEvents />
    </div>
  );
}
